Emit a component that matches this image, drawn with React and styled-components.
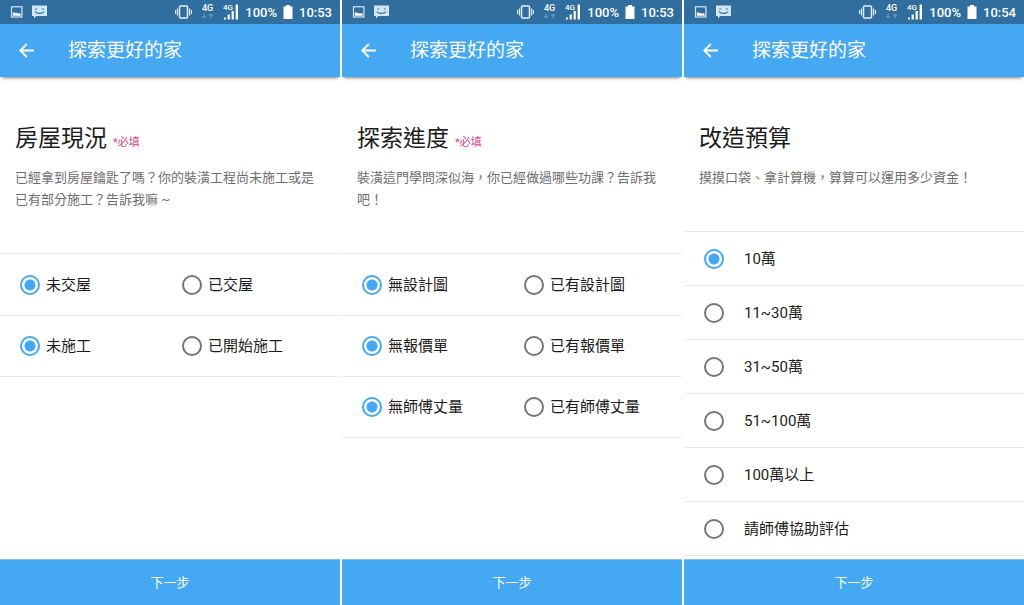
import React, { useId, useState } from "react";
import styled, { createGlobalStyle } from "styled-components";

const BLUE = "#44a8f2";

const GlobalStyle = createGlobalStyle`
  * { box-sizing: border-box; }
  html, body, #root { height: 100%; }
  body {
    margin: 0;
    background: #fff;
    color: #1c1c1c;
    font-family: Roboto, "Noto Sans CJK TC", sans-serif;
  }
`;

const Board = styled.main`
  display: grid;
  grid-template-columns: repeat(3, minmax(0, 1fr));
  gap: 2px;
  min-height: 100vh;
`;

const Screen = styled.section`
  display: flex;
  flex-direction: column;
`;

const StatusBar = styled.div`
  display: flex;
  align-items: center;
  justify-content: space-between;
  height: 24px;
  padding: 0 8px 0 10px;
  background: #2f6e9f;
  color: #fff;
  font-size: 13px;
  font-weight: 500;
`;

const StatusGroup = styled.div`
  display: flex;
  align-items: center;
  gap: ${(p) => p.$gap}px;
`;

const AppBar = styled.header`
  display: flex;
  align-items: center;
  gap: 31px;
  height: 53px;
  padding: 0 16px;
  background: ${BLUE};
  color: #fff;
  box-shadow: 0 3px 3px -2px rgba(0, 0, 0, 0.5);
`;

const BackButton = styled.button`
  display: flex;
  padding: 0;
  border: 0;
  background: none;
  color: inherit;
`;

const BarTitle = styled.h1`
  margin: 0;
  font-size: 19px;
  font-weight: 400;
  line-height: 28px;
`;

const Intro = styled.div`
  padding: 45px 16px 42px 15px;
`;

const HeadingRow = styled.div`
  display: flex;
  align-items: baseline;
  gap: 6px;
`;

const Heading = styled.h2`
  margin: 0;
  font-size: 23px;
  font-weight: 400;
  line-height: 34px;
`;

const Required = styled.span`
  color: #e0408a;
  font-size: 11px;
`;

const Description = styled.p`
  margin: 11px 0 0;
  color: #6e6e6e;
  font-size: 13px;
  line-height: 22px;
`;

const Group = styled.div`
  border-top: 1px solid #ebebeb;
`;

const PairRow = styled.div`
  display: grid;
  grid-template-columns: 162px 1fr;
  align-items: center;
  height: ${(p) => (p.$tall ? 62 : 61)}px;
  padding-left: 20px;
  border-bottom: 1px solid #ebebeb;
`;

const ListRow = styled.div`
  display: flex;
  align-items: center;
  height: 54px;
  padding-left: 20px;
  border-bottom: 1px solid #ebebeb;
`;

const OptionLabel = styled.label`
  display: flex;
  align-items: center;
  gap: ${(p) => p.$gap}px;
  font-size: 15px;
  line-height: 22px;
`;

const Radio = styled.input`
  appearance: none;
  flex: none;
  width: 20px;
  height: 20px;
  margin: 0;
  border: 2px solid #757575;
  border-radius: 50%;
  &:checked {
    border-color: ${BLUE};
    background: radial-gradient(circle, ${BLUE} 5px, transparent 6px);
  }
`;

const NextButton = styled.button`
  height: 46px;
  margin-top: auto;
  padding: 0 0 2px;
  border: 0;
  border-top: 1px solid #83bfec;
  background: ${BLUE};
  color: #fff;
  font-family: inherit;
  font-size: 13px;
`;

const PictureIcon = () => (
  <svg width="13" height="12" viewBox="0 0 13 12" aria-hidden="true">
    <rect x="1.5" y="0.8" width="10.4" height="10.2" fill="none" stroke="#d5e6f3" strokeWidth="1.2" />
    <path d="M2.8 9.8V7l1.3-.9 1 1.2 1.4-.6 1.4 1 1.3-.7 1.5 1v1.8z" fill="#fff" />
  </svg>
);

const MessageIcon = () => (
  <svg width="15" height="14" viewBox="0 0 15 14" aria-hidden="true">
    <path d="M0 .5h15v10.5H4.3L2 13.6V11H0z" fill="#d3e6f7" />
    <path d="M3.2 4h2M9.8 4h2M2.8 6.5c2 2.6 7.400 2.600 9.400 0" fill="none" stroke="#2f6e9f" strokeWidth="1.2" />
  </svg>
);

const VibrateIcon = () => (
  <svg width="17" height="14" viewBox="0 0 17 14" fill="none" stroke="#e6f0f7" aria-hidden="true">
    <rect x="4.5" y="1" width="8" height="12" rx="1" strokeWidth="1.5" />
    <path d="M2.4 3.5v7M.6 5v4M14.6 3.5v7M16.4 5v4" strokeWidth="1.1" />
  </svg>
);

const DataIcon = () => (
  <svg width="13" height="18" viewBox="0 0 13 18" aria-hidden="true">
    <text x="6.5" y="8" textAnchor="middle" fontSize="9" fontWeight="500" fill="#fff">4G</text>
    <path d="M3 10.5V15M1.2 13.2 3 15l1.8-1.8M10 15.500V11M8.2 12.7l1.800-1.800 1.800 1.800" fill="none" stroke="#79a6c8" />
  </svg>
);

const SignalIcon = () => (
  <svg width="16" height="18" viewBox="0 0 16 18" aria-hidden="true">
    <text x="0" y="7" fontSize="8" fontWeight="500" fill="#fff">4G</text>
    <path d="M1 16.500v-2h1.800v2zM4.600 16.500v-5h2.200v5zM8.600 16.500V8h2.200v8.500zM12.600 16.500V1.500H15v15z" fill="#fff" />
  </svg>
);

const BatteryIcon = () => (
  <svg width="10" height="14" viewBox="0 0 10 14" aria-hidden="true">
    <path d="M3 0h4v1.5h2.500V14H.5V1.5H3z" fill="#fff" />
  </svg>
);

const BackIcon = () => (
  <svg width="21" height="20" viewBox="0 0 21 20" aria-hidden="true">
    <path d="M18 9.5H4.5M10.8 3 4.300 9.500l6.500 6.500" fill="none" stroke="#fff" strokeWidth="1.8" />
  </svg>
);

function Phone({ time, children }) {
  return (
    <Screen>
      <StatusBar>
        <StatusGroup $gap={9}>
          <PictureIcon />
          <MessageIcon />
        </StatusGroup>
        <StatusGroup $gap={6}>
          <StatusGroup $gap={9}>
            <VibrateIcon />
            <DataIcon />
            <SignalIcon />
          </StatusGroup>
          <span>100%</span>
          <BatteryIcon />
          <span>{time}</span>
        </StatusGroup>
      </StatusBar>
      <AppBar>
        <BackButton type="button" aria-label="返回">
          <BackIcon />
        </BackButton>
        <BarTitle>探索更好的家</BarTitle>
      </AppBar>
      {children}
      <NextButton type="button">下一步</NextButton>
    </Screen>
  );
}

function Question({ title, required, children }) {
  return (
    <Intro>
      <HeadingRow>
        <Heading>{title}</Heading>
        {required && <Required>*必填</Required>}
      </HeadingRow>
      <Description>{children}</Description>
    </Intro>
  );
}

function Options({ options, gap, wrap }) {
  const name = useId();
  const [selected, setSelected] = useState(0);
  const items = options.map((text, i) => {
    const option = (
      <OptionLabel key={text} $gap={gap}>
        <Radio type="radio" name={name} checked={selected === i} onChange={() => setSelected(i)} />
        {text}
      </OptionLabel>
    );
    return wrap ? <ListRow key={text}>{option}</ListRow> : option;
  });
  return <>{items}</>;
}

function Pairs({ rows }) {
  return (
    <Group>
      {rows.map((row, i) => (
        <PairRow key={row[0]} $tall={i === 0}>
          <Options options={row} gap={6} />
        </PairRow>
      ))}
    </Group>
  );
}

export default function App() {
  return (
    <>
      <GlobalStyle />
      <Board>
        <Phone time="10:53">
          <Question title="房屋現況" required>
            已經拿到房屋鑰匙了嗎？你的裝潢工程尚未施工或是已有部分施工？告訴我嘛 ~
          </Question>
          <Pairs rows={[["未交屋", "已交屋"], ["未施工", "已開始施工"]]} />
        </Phone>
        <Phone time="10:53">
          <Question title="探索進度" required>
            裝潢這門學問深似海，你已經做過哪些功課？告訴我吧！
          </Question>
          <Pairs
            rows={[
              ["無設計圖", "已有設計圖"],
              ["無報價單", "已有報價單"],
              ["無師傅丈量", "已有師傅丈量"],
            ]}
          />
        </Phone>
        <Phone time="10:54">
          <Question title="改造預算">
            摸摸口袋、拿計算機，算算可以運用多少資金！
          </Question>
          <Group>
            <Options
              wrap
              gap={20}
              options={["10萬", "11~30萬", "31~50萬", "51~100萬", "100萬以上", "請師傅協助評估"]}
            />
          </Group>
        </Phone>
      </Board>
    </>
  );
}
